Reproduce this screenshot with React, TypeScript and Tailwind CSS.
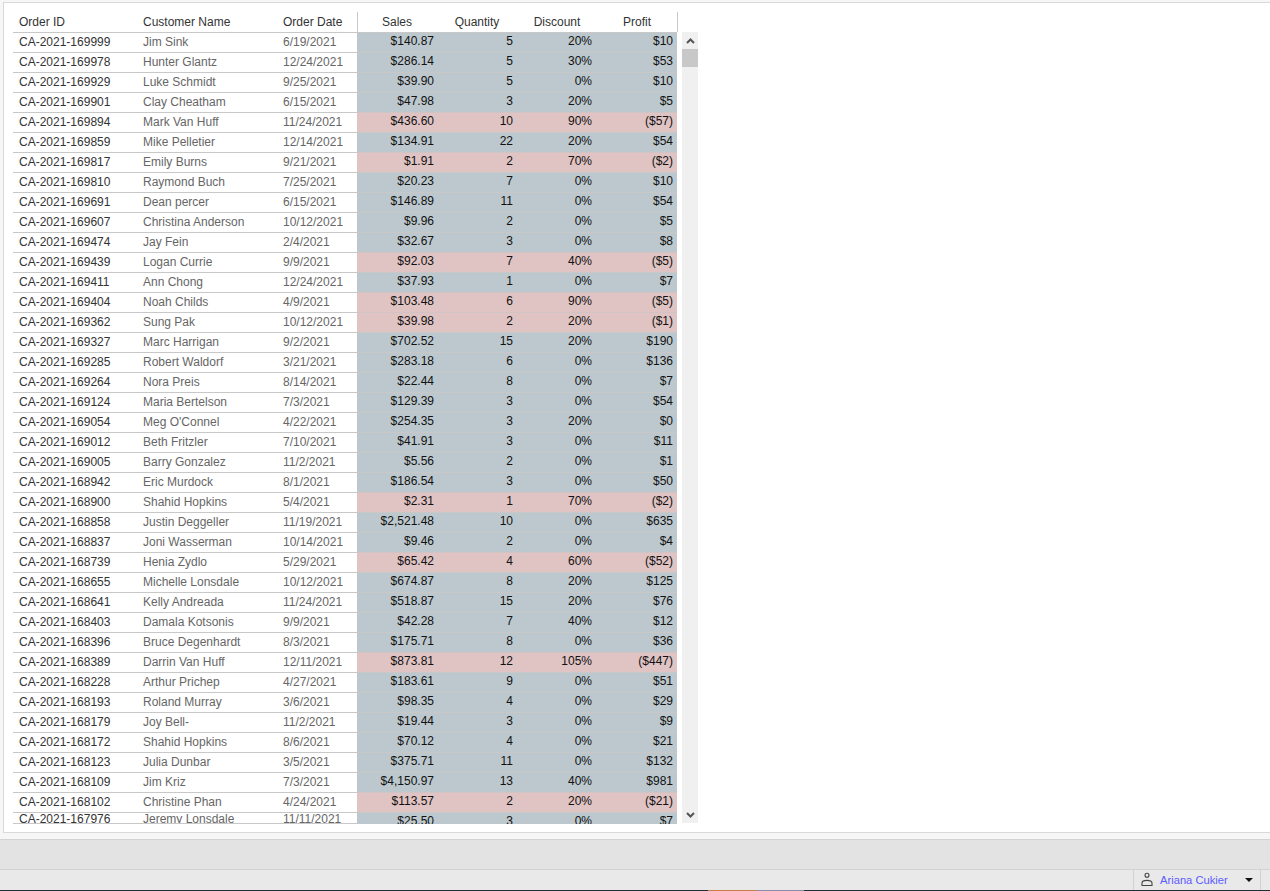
const rows: [string, string, string, string, string, string, string, boolean?][] = [
  ["CA-2021-169999", "Jim Sink", "6/19/2021", "$140.87", "5", "20%", "$10"],
  ["CA-2021-169978", "Hunter Glantz", "12/24/2021", "$286.14", "5", "30%", "$53"],
  ["CA-2021-169929", "Luke Schmidt", "9/25/2021", "$39.90", "5", "0%", "$10"],
  ["CA-2021-169901", "Clay Cheatham", "6/15/2021", "$47.98", "3", "20%", "$5"],
  ["CA-2021-169894", "Mark Van Huff", "11/24/2021", "$436.60", "10", "90%", "($57)", true],
  ["CA-2021-169859", "Mike Pelletier", "12/14/2021", "$134.91", "22", "20%", "$54"],
  ["CA-2021-169817", "Emily Burns", "9/21/2021", "$1.91", "2", "70%", "($2)", true],
  ["CA-2021-169810", "Raymond Buch", "7/25/2021", "$20.23", "7", "0%", "$10"],
  ["CA-2021-169691", "Dean percer", "6/15/2021", "$146.89", "11", "0%", "$54"],
  ["CA-2021-169607", "Christina Anderson", "10/12/2021", "$9.96", "2", "0%", "$5"],
  ["CA-2021-169474", "Jay Fein", "2/4/2021", "$32.67", "3", "0%", "$8"],
  ["CA-2021-169439", "Logan Currie", "9/9/2021", "$92.03", "7", "40%", "($5)", true],
  ["CA-2021-169411", "Ann Chong", "12/24/2021", "$37.93", "1", "0%", "$7"],
  ["CA-2021-169404", "Noah Childs", "4/9/2021", "$103.48", "6", "90%", "($5)", true],
  ["CA-2021-169362", "Sung Pak", "10/12/2021", "$39.98", "2", "20%", "($1)", true],
  ["CA-2021-169327", "Marc Harrigan", "9/2/2021", "$702.52", "15", "20%", "$190"],
  ["CA-2021-169285", "Robert Waldorf", "3/21/2021", "$283.18", "6", "0%", "$136"],
  ["CA-2021-169264", "Nora Preis", "8/14/2021", "$22.44", "8", "0%", "$7"],
  ["CA-2021-169124", "Maria Bertelson", "7/3/2021", "$129.39", "3", "0%", "$54"],
  ["CA-2021-169054", "Meg O'Connel", "4/22/2021", "$254.35", "3", "20%", "$0"],
  ["CA-2021-169012", "Beth Fritzler", "7/10/2021", "$41.91", "3", "0%", "$11"],
  ["CA-2021-169005", "Barry Gonzalez", "11/2/2021", "$5.56", "2", "0%", "$1"],
  ["CA-2021-168942", "Eric Murdock", "8/1/2021", "$186.54", "3", "0%", "$50"],
  ["CA-2021-168900", "Shahid Hopkins", "5/4/2021", "$2.31", "1", "70%", "($2)", true],
  ["CA-2021-168858", "Justin Deggeller", "11/19/2021", "$2,521.48", "10", "0%", "$635"],
  ["CA-2021-168837", "Joni Wasserman", "10/14/2021", "$9.46", "2", "0%", "$4"],
  ["CA-2021-168739", "Henia Zydlo", "5/29/2021", "$65.42", "4", "60%", "($52)", true],
  ["CA-2021-168655", "Michelle Lonsdale", "10/12/2021", "$674.87", "8", "20%", "$125"],
  ["CA-2021-168641", "Kelly Andreada", "11/24/2021", "$518.87", "15", "20%", "$76"],
  ["CA-2021-168403", "Damala Kotsonis", "9/9/2021", "$42.28", "7", "40%", "$12"],
  ["CA-2021-168396", "Bruce Degenhardt", "8/3/2021", "$175.71", "8", "0%", "$36"],
  ["CA-2021-168389", "Darrin Van Huff", "12/11/2021", "$873.81", "12", "105%", "($447)", true],
  ["CA-2021-168228", "Arthur Prichep", "4/27/2021", "$183.61", "9", "0%", "$51"],
  ["CA-2021-168193", "Roland Murray", "3/6/2021", "$98.35", "4", "0%", "$29"],
  ["CA-2021-168179", "Joy Bell-", "11/2/2021", "$19.44", "3", "0%", "$9"],
  ["CA-2021-168172", "Shahid Hopkins", "8/6/2021", "$70.12", "4", "0%", "$21"],
  ["CA-2021-168123", "Julia Dunbar", "3/5/2021", "$375.71", "11", "0%", "$132"],
  ["CA-2021-168109", "Jim Kriz", "7/3/2021", "$4,150.97", "13", "40%", "$981"],
  ["CA-2021-168102", "Christine Phan", "4/24/2021", "$113.57", "2", "20%", "($21)", true],
  ["CA-2021-167976", "Jeremy Lonsdale", "11/11/2021", "$25.50", "3", "0%", "$7"],
]

export default function App() {
  return (
    <div className="h-[891px] w-full overflow-hidden bg-white font-['Liberation_Sans',Arial,sans-serif] text-xs flex flex-col">
      {/* Dashboard panel */}
      <div className="h-[839px] pt-[2px] pl-[3px] bg-[#f6f6f6] shrink-0">
        <div className="h-[831px] bg-white border-t border-l border-b border-[#d9d9d9] pl-[9px] pt-[9px] flex">
          <div className="w-[665px] shrink-0">
            {/* Header */}
            <div className="flex h-[20px] leading-[20px] text-[#333333]">
              <div className="w-[124px] pl-[6px]">Order ID</div>
              <div className="w-[140px] pl-[6px]">Customer Name</div>
              <div className="w-[81px] pl-[6px] border-r border-[#c8c8c8]">Order Date</div>
              <div className="w-[79px] pr-[1px] text-center">Sales</div>
              <div className="w-[80px] text-center">Quantity</div>
              <div className="w-[80px] text-center">Discount</div>
              <div className="w-[81px] text-center border-r border-[#c8c8c8]">Profit</div>
            </div>
            {/* Rows */}
            <div className="h-[792px] overflow-hidden">
              {rows.map((r, i) => (
                <div key={r[0]} className="flex h-[20px]">
                  <div
                    className={
                      i === rows.length - 1
                        ? "flex w-[344px] h-[12px] border-t border-b border-[#c8c8c8] leading-[13px] overflow-hidden"
                        : "flex w-[344px] h-[20px] border-t border-[#c8c8c8] leading-[18px]"
                    }
                  >
                    <div className="w-[124px] pl-[6px] text-[#333333]">{r[0]}</div>
                    <div className="w-[140px] pl-[6px] text-[#666666]">{r[1]}</div>
                    <div className="w-[80px] pl-[6px] text-[#666666]">{r[2]}</div>
                  </div>
                  <div
                    className={
                      r[7]
                        ? "flex w-[320px] h-[20px] border-t border-[#d2c4c4] bg-[#e0c3c3] leading-[17px] text-[#111111]"
                        : "flex w-[320px] h-[20px] border-t border-[#c8c8c8] bg-[#bcc8cd] leading-[17px] text-[#111111]"
                    }
                  >
                    <div className="w-[80px] pr-[3px] text-right">{r[3]}</div>
                    <div className="w-[80px] pr-[4px] text-right">{r[4]}</div>
                    <div className="w-[80px] pr-[5px] text-right">{r[5]}</div>
                    <div className="w-[80px] pr-[4px] text-right">{r[6]}</div>
                  </div>
                </div>
              ))}
            </div>
          </div>
          {/* Scrollbar */}
          <div className="ml-[4px] mt-[20px] w-[16px] h-[791px] bg-[#f0f0f0] flex flex-col items-center justify-between">
            <div className="w-full">
              <div className="h-[17px] flex items-center justify-center">
                <svg width="9" height="6" viewBox="0 0 9 6">
                  <path d="M1 5 L4.5 1.5 L8 5" fill="none" stroke="#555555" strokeWidth="2" />
                </svg>
              </div>
              <div className="h-[18px] bg-[#c8c8c8]" />
            </div>
            <div className="h-[17px] flex items-center justify-center">
              <svg width="9" height="6" viewBox="0 0 9 6">
                <path d="M1 1 L4.5 4.5 L8 1" fill="none" stroke="#555555" strokeWidth="2" />
              </svg>
            </div>
          </div>
        </div>
      </div>

      {/* Empty band */}
      <div className="h-[31px] shrink-0 bg-[#e3e3e3] border-t border-b border-[#d2d2d2]" />

      {/* Status bar */}
      <div className="h-[20px] shrink-0 bg-[#e9e9e9] flex justify-end">
        <div className="w-[128px] mr-[9px] flex items-center border-l border-r border-[#d2d2d2] pl-[5px] pr-[6px]">
          <svg width="14" height="15" viewBox="0 0 14 15" className="ml-[1px] -mt-[1px]">
            <circle cx="7" cy="3.2" r="2" fill="none" stroke="#444444" strokeWidth="1.1" />
            <path d="M2 13.5 V11 C2 9.4 4 8.4 7 8.4 C10 8.4 12 9.4 12 11 V13.5 Z" fill="none" stroke="#444444" strokeWidth="1.1" />
          </svg>
          <span className="ml-[6px] text-[11.2px] text-[#5c5cff]">Ariana Cukier</span>
          <svg width="8" height="4" viewBox="0 0 8 4" className="ml-auto mr-[1px]">
            <path d="M0 0 H8 L4 4 Z" fill="#111111" />
          </svg>
        </div>
      </div>

      {/* Bottom edge */}
      <div className="h-[1px] shrink-0 bg-[#1f2f36] flex">
        <div className="ml-[708px] w-[48px] bg-[#c87d45]" />
        <div className="w-[48px] bg-[#8d8aa8]" />
      </div>
    </div>
  )
}
